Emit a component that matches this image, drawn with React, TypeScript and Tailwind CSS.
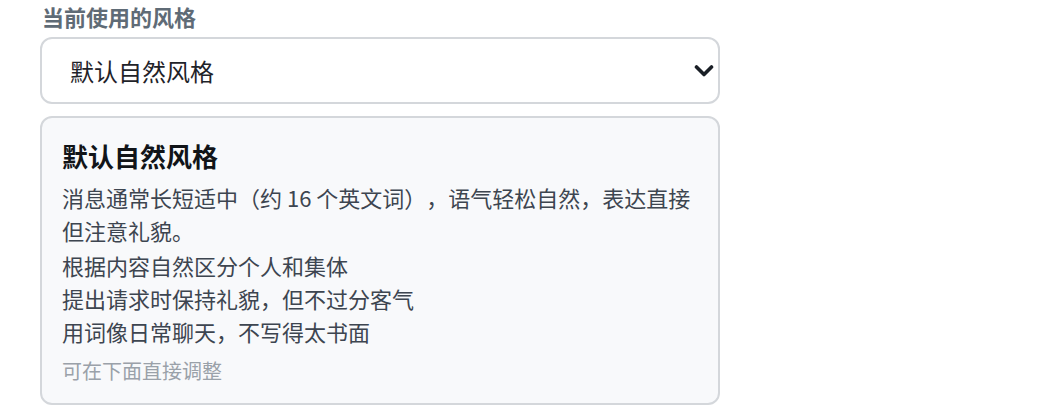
const font = { fontFamily: '"Noto Sans CJK SC", "Noto Sans", sans-serif' };

const lines = ["根据内容自然区分个人和集体", "提出请求时保持礼貌，但不过分客气", "用词像日常聊天，不写得太书面"];

export default function App() {
  return (
    <div className="w-[1040px] h-[408px] bg-white overflow-hidden [text-spacing-trim:space-all]" style={font}>
      <div className="ml-10 w-[680px]">
        <div className="text-[22px] leading-[33px] font-bold text-[#5f6b76] ml-[2px]">当前使用的风格</div>
        <div className="mt-1 h-[67px] border-2 border-[#d4d7db] rounded-xl bg-white flex items-center justify-between pl-7 pr-[4px]">
          <span className="text-[24px] text-[#1f2329]">默认自然风格</span>
          <svg width="20" height="14" viewBox="0 0 20 14" fill="none" className="mt-[1px]">
            <path d="M2.5 3 L10 10.5 L17.5 3" stroke="#1a1f26" strokeWidth="3.6" strokeLinecap="round" strokeLinejoin="round" />
          </svg>
        </div>
        <div className="mt-[12px] border-2 border-[#d4d7db] rounded-xl bg-[#f8f9fb] px-5 pt-[18px] pb-[17px]">
          <div className="text-[26px] leading-[39px] font-bold text-[#111418]">默认自然风格</div>
          <p className="mt-[6px] text-[22px] leading-[33px] text-[#3d4550]">
            消息通常长短适中（约 16 个英文词），语气轻松自然，表达直接但注意礼貌。
          </p>
          <div className="mt-[2px]">
            {lines.map((l) => (
              <div key={l} className="text-[22px] leading-[33px] text-[#3d4550]">{l}</div>
            ))}
          </div>
          <div className="mt-[8px] text-[20px] leading-[30px] text-[#9aa1a9]">可在下面直接调整</div>
        </div>
      </div>
    </div>
  );
}
